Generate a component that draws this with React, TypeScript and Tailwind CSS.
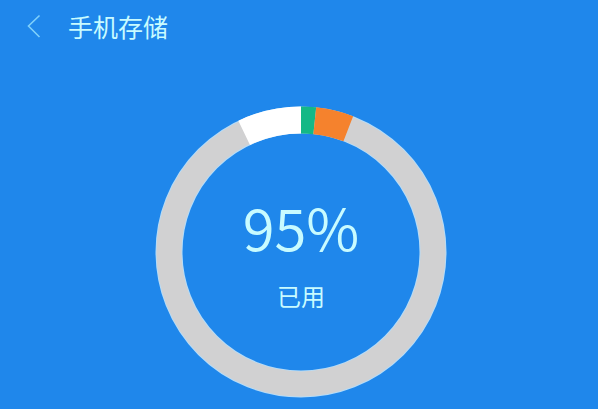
type Segment = { name: string; color: string; start: number; sweep: number };

// Angles in degrees, clockwise from twelve o'clock
const segments: Segment[] = [
  { name: "white", color: "#ffffff", start: -25.5, sweep: 25.5 },
  { name: "green", color: "#14b886", start: 0, sweep: 6 },
  { name: "orange", color: "#f5822d", start: 6, sweep: 15 },
];

function StorageRing() {
  return (
    <svg viewBox="0 0 292 292" className="block w-full" aria-hidden="true">
      <circle cx="146" cy="146" r="132" fill="none" stroke="#b5dcf8" strokeWidth="27" />
      <circle cx="146" cy="146" r="132" fill="none" stroke="#d1d1d2" strokeWidth="25" />
      {segments.map((s) => (
        <circle
          key={s.name}
          cx="146"
          cy="146"
          r="132"
          fill="none"
          stroke={s.color}
          strokeWidth="27"
          pathLength={360}
          strokeDasharray={`${s.sweep} ${360 - s.sweep}`}
          transform={`rotate(${s.start - 90} 146 146)`}
        />
      ))}
    </svg>
  );
}

export default function App() {
  return (
    <div className="flex min-h-screen flex-col bg-[#1f87eb] font-['Noto_Sans_CJK_SC',sans-serif] text-[#c8fbff]">
      <header className="flex h-13 items-center gap-6 pl-6">
        <button type="button" aria-label="返回" className="flex h-6 w-5 items-center justify-center">
          <svg viewBox="0 0 20 24" className="h-6 w-5" fill="none" stroke="#7fd0fa" strokeWidth="1.6">
            <path d="M15.500 1.500 4.500 12l11 11" />
          </svg>
        </button>
        <h1 className="text-[25px] leading-8 font-normal">手机存储</h1>
      </header>

      <main className="flex flex-1 justify-center pt-[54px] pb-2 pl-1">
        <div className="grid w-full max-w-[292px] place-items-center self-start">
          <div className="col-start-1 row-start-1 w-full">
            <StorageRing />
          </div>
          <div className="col-start-1 row-start-1 flex flex-col items-center gap-[18px] pb-0.5">
            <p className="text-[58px] leading-[72px] font-[350]">95%</p>
            <p className="text-2xl">已用</p>
          </div>
        </div>
      </main>
    </div>
  );
}
